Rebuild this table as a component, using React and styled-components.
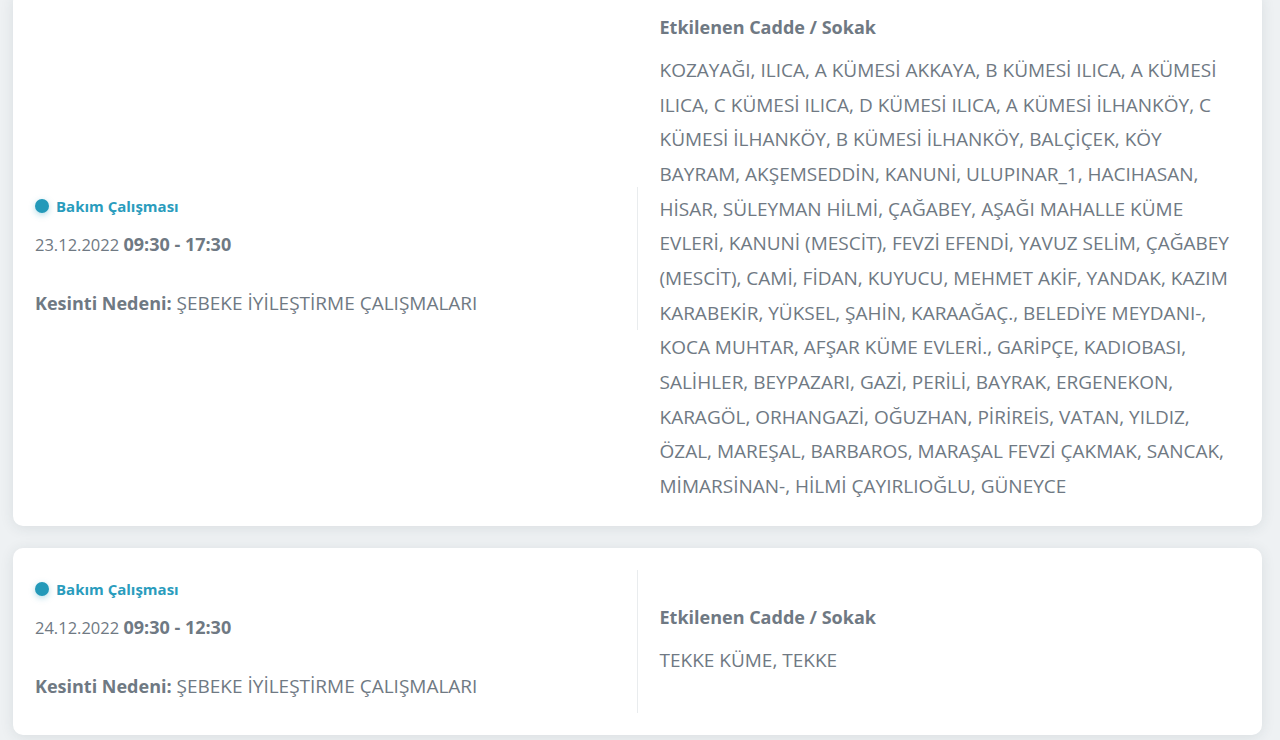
import React from 'react';
import styled, { createGlobalStyle } from 'styled-components';

const GlobalStyle = createGlobalStyle`
  html, body {
    margin: 0;
    padding: 0;
    background: #eef1f3;
    font-family: "Open Sans", "Noto Sans", sans-serif;
    overflow: hidden;
  }
`;

const PageContainer = styled.div`
  display: flex;
  flex-direction: column;
  gap: 22px;
  padding: 0 18px 40px 13px;
  margin-top: -8px;
`;

const OutageCard = styled.div`
  display: grid;
  grid-template-columns: 1fr 1fr;
  align-items: center;
  padding: 22px;
  background: #ffffff;
  border-radius: 10px;
  box-shadow: 0 2px 14px rgba(40, 55, 70, 0.1);
`;

const InfoColumn = styled.div`
  display: flex;
  flex-direction: column;
  padding: 8px 0 13px;
  border-right: 1px solid #e9ecee;
`;

const StreetColumn = styled.div`
  padding-left: 22px;
`;

const TypeTag = styled.div`
  display: flex;
  align-items: center;
  gap: 7px;
  height: 22px;
  margin-bottom: 13px;
  font-size: 15px;
  font-weight: 700;
  color: #2a9cbd;
`;

const Dot = styled.span`
  width: 14px;
  height: 14px;
  border-radius: 50%;
  background: #2399b9;
  box-shadow: 0 2px 6px rgba(35, 153, 185, 0.35);
`;

const DateLine = styled.div`
  font-size: 16.5px;
  line-height: 28px;
  color: #6f7983;
  margin-bottom: 30px;

  strong {
    font-size: 18px;
    font-weight: 700;
  }
`;

const ReasonLine = styled.div`
  font-size: 19px;
  line-height: 28px;
  color: #6f7983;

  strong {
    font-size: 18px;
    font-weight: 700;
  }
`;

const StreetTitle = styled.h4`
  margin: 0 0 13px;
  font-size: 18px;
  line-height: 26px;
  font-weight: 700;
  color: #6f7983;
`;

const StreetList = styled.p`
  margin: 0;
  font-size: 19px;
  line-height: 34.67px;
  color: #6f7983;
`;

const outages = [
  {
    type: 'Bakım Çalışması',
    date: '23.12.2022',
    time: '09:30 - 17:30',
    reason: 'ŞEBEKE İYİLEŞTİRME ÇALIŞMALARI',
    streets:
      'KOZAYAĞI, ILICA, A KÜMESİ AKKAYA, B KÜMESİ ILICA, A KÜMESİ ILICA, C KÜMESİ ILICA, D KÜMESİ ILICA, A KÜMESİ İLHANKÖY, C KÜMESİ İLHANKÖY, B KÜMESİ İLHANKÖY, BALÇİÇEK, KÖY BAYRAM, AKŞEMSEDDİN, KANUNİ, ULUPINAR_1, HACIHASAN, HİSAR, SÜLEYMAN HİLMİ, ÇAĞABEY, AŞAĞI MAHALLE KÜME EVLERİ, KANUNİ (MESCİT), FEVZİ EFENDİ, YAVUZ SELİM, ÇAĞABEY (MESCİT), CAMİ, FİDAN, KUYUCU, MEHMET AKİF, YANDAK, KAZIM KARABEKİR, YÜKSEL, ŞAHİN, KARAAĞAÇ., BELEDİYE MEYDANI-, KOCA MUHTAR, AFŞAR KÜME EVLERİ., GARİPÇE, KADIOBASI, SALİHLER, BEYPAZARI, GAZİ, PERİLİ, BAYRAK, ERGENEKON, KARAGÖL, ORHANGAZİ, OĞUZHAN, PİRİREİS, VATAN, YILDIZ, ÖZAL, MAREŞAL, BARBAROS, MARAŞAL FEVZİ ÇAKMAK, SANCAK, MİMARSİNAN-, HİLMİ ÇAYIRLIOĞLU, GÜNEYCE',
  },
  {
    type: 'Bakım Çalışması',
    date: '24.12.2022',
    time: '09:30 - 12:30',
    reason: 'ŞEBEKE İYİLEŞTİRME ÇALIŞMALARI',
    streets: 'TEKKE KÜME, TEKKE',
  },
];

const App = () => {
  return (
    <>
      <GlobalStyle />
      <PageContainer>
        {outages.map((item, index) => (
          <OutageCard key={index}>
            <InfoColumn>
              <TypeTag>
                <Dot />
                {item.type}
              </TypeTag>
              <DateLine>
                {item.date} <strong>{item.time}</strong>
              </DateLine>
              <ReasonLine>
                <strong>Kesinti Nedeni:</strong> {item.reason}
              </ReasonLine>
            </InfoColumn>
            <StreetColumn>
              <StreetTitle>Etkilenen Cadde / Sokak</StreetTitle>
              <StreetList>{item.streets}</StreetList>
            </StreetColumn>
          </OutageCard>
        ))}
      </PageContainer>
    </>
  );
};

export default App;
